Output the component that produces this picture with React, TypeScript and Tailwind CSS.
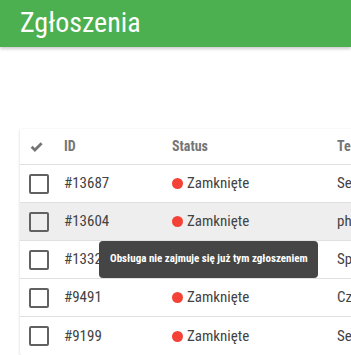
const rows = [
  { id: "#13687", topic: "Serwis" },
  { id: "#13604", topic: "phone" },
  { id: "#13321", topic: "Sprawa" },
  { id: "#9491", topic: "Czat" },
  { id: "#9199", topic: "Serwis" },
];

const font = { fontFamily: "'Roboto Condensed', 'Liberation Sans Narrow', 'DejaVu Sans Condensed', Roboto, sans-serif" };

function DoneIcon() {
  return (
    <svg width="13" height="13" viewBox="0 0 24 24" fill="none" stroke="#757575" strokeWidth="5" strokeLinejoin="miter">
      <path d="M3 12.5l6 6L21.5 6" />
    </svg>
  );
}

export default function App() {
  return (
    <div className="w-[351px] h-[355px] overflow-hidden bg-white relative" style={font}>
      {/* toolbar */}
      <div className="h-[47px] bg-[#4caf50] flex items-center pl-5 shadow-[0_2px_3px_rgba(0,0,0,0.2)] relative z-10">
        <h1 className="text-[28px] leading-none text-white -mt-[2px]">Zgłoszenia</h1>
      </div>

      {/* table card */}
      <div className="mt-[82px] ml-5 w-[600px] bg-white rounded-[2px] shadow-[0_1px_3px_rgba(0,0,0,0.18)] relative">
        <div className="grid grid-cols-[44px_108px_165px_1fr] h-9 items-center border-b border-[#e0e0e0] text-[14px] font-bold text-[#757575]">
          <div className="pl-[10px] flex items-center"><DoneIcon /></div>
          <div>ID</div>
          <div>Status</div>
          <div>Temat</div>
        </div>
        {rows.map((r, i) => (
          <div
            key={r.id}
            className={`grid grid-cols-[44px_108px_165px_1fr] h-[38px] items-center text-[15px] text-[#424242] ${i < rows.length - 1 ? "border-b border-[#e0e0e0]" : ""} ${i === 1 ? "bg-[#eeeeee]" : ""}`}
          >
            <div className="pl-[9px] flex items-center">
              <div className="w-5 h-5 border-2 border-[#616161] rounded-[2px]" />
            </div>
            <div>{r.id}</div>
            <div className="flex items-center gap-[4px]">
              <span className="w-[11px] h-[11px] rounded-full bg-[#f44336] inline-block" />
              <span>Zamknięte</span>
            </div>
            <div>{r.topic}</div>
          </div>
        ))}

        {/* tooltip */}
        <div className="absolute left-[79px] top-[112px] w-[219px] h-[37px] bg-[#454545] rounded-[4px] flex items-center pl-[11px] text-white text-[11px] font-bold whitespace-nowrap">
          Obsługa nie zajmuje się już tym zgłoszeniem
        </div>
      </div>
    </div>
  );
}
